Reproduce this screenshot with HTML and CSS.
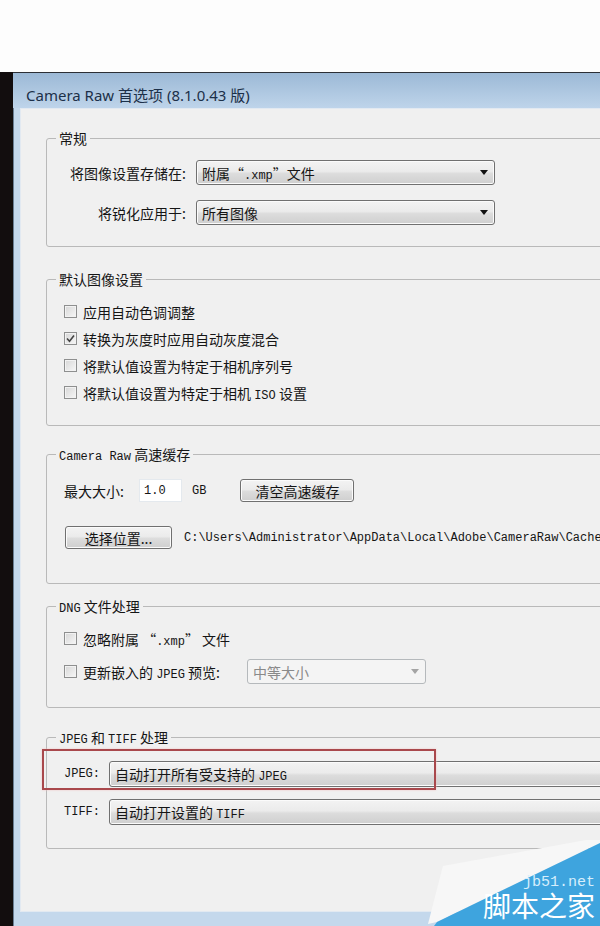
FILE: index.html
```html
<!DOCTYPE html>
<html lang="zh-CN">
<head>
    <meta charset="UTF-8">
    <meta name="viewport" content="width=device-width, initial-scale=1.0">
    <title>Camera Raw 首选项</title>
    <link rel="stylesheet" href="styles.css">
</head>
<body>
    <div class="screen">
        <div class="desk"></div>
        <div class="window">
            <div class="titlebar">Camera Raw 首选项 (8.1.0.43 版)</div>
            <div class="panel">

                <fieldset class="group general">
                    <legend>常规</legend>
                    <div class="body form">
                        <span class="label">将图像设置存储在:</span>
                        <div class="combo"><span>附属“<span class="en">.xmp</span>”文件</span><span class="arrow"></span></div>
                        <span class="label">将锐化应用于:</span>
                        <div class="combo"><span>所有图像</span><span class="arrow"></span></div>
                    </div>
                </fieldset>

                <fieldset class="group defaults">
                    <legend>默认图像设置</legend>
                    <div class="body">
                        <div class="check"><span class="box"></span><span>应用自动色调调整</span></div>
                        <div class="check"><span class="box"><svg width="11" height="11" viewBox="0 0 11 11"><path d="M2 5.5 L4.5 8.2 L9 2.5" fill="none" stroke="#444" stroke-width="1.6"/></svg></span><span>转换为灰度时应用自动灰度混合</span></div>
                        <div class="check"><span class="box"></span><span>将默认值设置为特定于相机序列号</span></div>
                        <div class="check"><span class="box"></span><span>将默认值设置为特定于相机 <span class="en">ISO</span> 设置</span></div>
                    </div>
                </fieldset>

                <fieldset class="group cache">
                    <legend><span class="en">Camera Raw</span> 高速缓存</legend>
                    <div class="body">
                        <div class="row">
                            <span class="size-label">最大大小:</span>
                            <span class="field en">1.0</span>
                            <span class="unit en">GB</span>
                            <span class="button purge">清空高速缓存</span>
                        </div>
                        <div class="row">
                            <span class="button locate">选择位置...</span>
                            <span class="path en">C:\Users\Administrator\AppData\Local\Adobe\CameraRaw\Cache</span>
                        </div>
                    </div>
                </fieldset>

                <fieldset class="group dng">
                    <legend><span class="en">DNG</span> 文件处理</legend>
                    <div class="body">
                        <div class="check"><span class="box"></span><span>忽略附属 “<span class="en">.xmp</span>” 文件</span></div>
                        <div class="check"><span class="box"></span><span>更新嵌入的 <span class="en">JPEG</span> 预览:</span><div class="combo disabled"><span>中等大小</span><span class="arrow"></span></div></div>
                    </div>
                </fieldset>

                <fieldset class="group jpeg">
                    <legend><span class="en">JPEG</span> 和 <span class="en">TIFF</span> 处理</legend>
                    <div class="body form">
                        <span class="en">JPEG:</span>
                        <div class="combo"><span>自动打开所有受支持的 <span class="en">JPEG</span></span></div>
                        <span class="en">TIFF:</span>
                        <div class="combo"><span>自动打开设置的 <span class="en">TIFF</span></span></div>
                        <div class="mark"></div>
                    </div>
                </fieldset>

            </div>
        </div>

        <div class="watermark">
            <svg width="172" height="86" viewBox="0 0 172 86">
                <polygon points="0,84 15,26 169,-2 172,-2 172,3 9,82" fill="#f7f7f7"/>
                <polygon points="9,82 172,3 172,86 6,86" fill="#3ea4de"/>
                <text x="95" y="46" font-family="Liberation Mono, monospace" font-size="15" fill="#d6eefc">jb51.net</text>
                <text x="55" y="77" font-family="Noto Sans CJK SC, sans-serif" font-size="28" fill="#ffffff">脚本之家</text>
            </svg>
        </div>
    </div>
</body>
</html>
```

FILE: styles.css
```css
body {
    margin: 0;
    background-color: #fdfdfd;
    font-family: "Noto Sans CJK SC", sans-serif;
    font-size: 14px;
    color: #151515;
}

.screen {
    position: relative;
    display: flex;
    height: 926px;
    padding-top: 72px;
    box-sizing: border-box;
    overflow: hidden;
}

.desk {
    width: 13px;
    flex-shrink: 0;
    background-color: #120d0e;
}

.window {
    flex: 1;
    min-width: 0;
    display: flex;
    flex-direction: column;
    overflow: hidden;
    border-top: 1px solid #2b2f35;
    padding: 0 0 14px 7px;
    background-color: #c4d8ec;
    box-shadow: inset 1px 0 0 #6a7f94;
}

.titlebar {
    height: 35px;
    margin-left: -7px;
    padding: 8px 0 0 13px;
    box-sizing: border-box;
    display: flex;
    align-items: center;
    background: linear-gradient(#9cb9d6, #bed4ea);
    font-family: "Noto Sans", "Noto Sans CJK SC", sans-serif;
    font-size: 15px;
    color: #1c3049;
    white-space: nowrap;
}

.panel {
    width: 640px;
    height: 804px;
    flex-shrink: 0;
    box-sizing: border-box;
    border: 1px solid #e2e9f1;
    background-color: #f0f0f0;
    padding: 20px 0 0 25px;
}

/* group boxes */
.group {
    width: 620px;
    min-width: 0;
    margin: 0;
    padding: 0;
    box-sizing: border-box;
    border: 1px solid #b9b9b9;
    border-radius: 3px;
}

.group legend {
    height: 18px;
    margin-left: 9px;
    padding: 0 3px;
    line-height: 18px;
    white-space: nowrap;
}

.en {
    font-family: "Liberation Mono", monospace;
    font-size: 12px;
}

.body {
    padding-left: 17px;
}

.general .body {
    padding-top: 13px;
    padding-bottom: 21px;
}

.defaults {
    margin-top: 23px;
}

.defaults .body {
    padding-top: 10px;
    padding-bottom: 19px;
}

.cache {
    margin-top: 19px;
}

.cache .body {
    display: flex;
    flex-direction: column;
    gap: 24px;
    padding-top: 16px;
    padding-bottom: 34px;
}

.dng {
    margin-top: 13px;
}

.dng .body {
    display: flex;
    flex-direction: column;
    gap: 8px;
    padding-top: 11px;
    padding-bottom: 23px;
}

.jpeg {
    margin-top: 20px;
}

.jpeg .body {
    position: relative;
    padding-top: 15px;
    padding-bottom: 23px;
}

/* label + dropdown grids */
.form {
    display: grid;
    align-items: center;
}

.general .form {
    grid-template-columns: 122px 299px;
    grid-auto-rows: 25px;
    column-gap: 10px;
    row-gap: 15px;
}

.jpeg .form {
    grid-template-columns: 35px 560px;
    grid-auto-rows: 26px;
    column-gap: 10px;
    row-gap: 12px;
}

.label {
    justify-self: end;
    white-space: nowrap;
}

.combo {
    display: flex;
    align-items: center;
    height: 100%;
    padding: 0 6px 0 5px;
    box-sizing: border-box;
    border: 1px solid #707070;
    border-radius: 3px;
    background: linear-gradient(#f3f3f3 0%, #ebebeb 45%, #dcdcdc 55%, #cfcfcf 100%);
    box-shadow: inset 0 0 0 1px #fbfbfb;
    white-space: nowrap;
}

.arrow {
    margin-left: auto;
    width: 0;
    height: 0;
    border-left: 4px solid transparent;
    border-right: 4px solid transparent;
    border-top: 5px solid #111;
}

.combo.disabled {
    width: 179px;
    height: 25px;
    margin-left: 21px;
    border-color: #b5b9bc;
    background: #f4f4f4;
    box-shadow: none;
    color: #8a8a8a;
}

.combo.disabled .arrow {
    border-top-color: #a4a4a4;
}

/* checkboxes */
.check {
    display: flex;
    align-items: center;
    gap: 6px;
    height: 27px;
    white-space: nowrap;
}

.dng .check {
    height: 25px;
}

.box {
    display: flex;
    align-items: center;
    justify-content: center;
    width: 13px;
    height: 13px;
    flex-shrink: 0;
    box-sizing: border-box;
    border: 1px solid #8e8f8f;
    background: linear-gradient(135deg, #d6d6d6, #f7f7f7);
    box-shadow: inset 0 0 0 1px #f2f2f2;
}

/* cache rows */
.row {
    display: flex;
    align-items: center;
    height: 23px;
    white-space: nowrap;
}

.size-label {
    width: 75px;
}

.field {
    width: 43px;
    height: 23px;
    padding-left: 4px;
    box-sizing: border-box;
    display: flex;
    align-items: center;
    border: 1px solid #e4e9ee;
    background-color: #fff;
}

.unit {
    margin-left: 10px;
}

.button {
    display: flex;
    align-items: center;
    justify-content: center;
    height: 23px;
    box-sizing: border-box;
    border: 1px solid #707070;
    border-radius: 3px;
    background: linear-gradient(#f3f3f3 0%, #ebebeb 45%, #dcdcdc 55%, #cfcfcf 100%);
    box-shadow: inset 0 0 0 1px #fbfbfb;
}

.purge {
    width: 114px;
    margin-left: 34px;
}

.locate {
    width: 107px;
    margin-left: 1px;
}

.path {
    margin-left: 12px;
}

/* red highlight drawn over the JPEG row */
.mark {
    position: absolute;
    left: -5px;
    top: 3px;
    width: 394px;
    height: 41px;
    box-sizing: border-box;
    border: 2px solid #a9484c;
    box-shadow: 0 0 2px #f0c4c4;
}

.watermark {
    position: absolute;
    right: 0;
    bottom: 0;
    line-height: 0;
}
```
